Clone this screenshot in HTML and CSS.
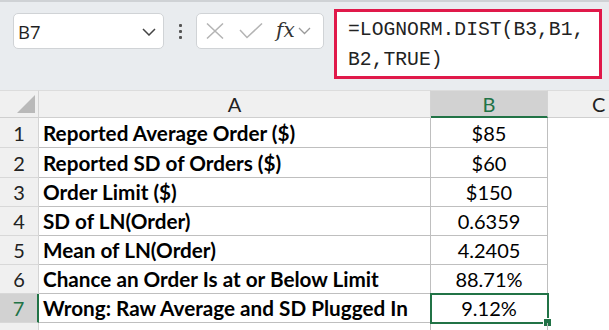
FILE: index.html
```html
<!DOCTYPE html>
<html>
<head>
<meta charset="utf-8">
<link rel="stylesheet" href="styles.css">
</head>
<body>
<div class="app">
  <div class="toolbar">
    <div class="namebox">
      <span class="name">B7</span>
      <svg class="chev" width="14" height="8" viewBox="0 0 14 8"><path d="M1 1 L7 7 L13 1" fill="none" stroke="#444" stroke-width="1.5"/></svg>
    </div>
    <div class="dots"><span></span><span></span><span></span></div>
    <div class="controls">
      <svg width="18" height="16" viewBox="0 0 18 16"><path d="M1 0.5 L17 15.5 M17 0.5 L1 15.5" stroke="#b4b4b4" stroke-width="1.5" fill="none"/></svg>
      <svg width="24" height="16" viewBox="0 0 24 16"><path d="M1 7 L8 14.5 L23 0.5" stroke="#b4b4b4" stroke-width="1.5" fill="none"/></svg>
      <span class="fx">fx</span>
      <svg width="13" height="8" viewBox="0 0 13 8"><path d="M1 1 L6.5 6.5 L12 1" fill="none" stroke="#9a9a9a" stroke-width="1.3"/></svg>
    </div>
    <div class="formula">=LOGNORM.DIST(B3,B1,<br>B2,TRUE)</div>
  </div>
  <div class="sheet">
    <div class="hd corner"><span class="tri"></span></div>
    <div class="hd col">A</div>
    <div class="hd col sel-col">B</div>
    <div class="hd col last">C</div>

    <div class="rh">1</div><div class="ca">Reported Average Order ($)</div><div class="cb">$85</div><div class="cc"></div>
    <div class="rh">2</div><div class="ca">Reported SD of Orders ($)</div><div class="cb">$60</div><div class="cc"></div>
    <div class="rh">3</div><div class="ca">Order Limit ($)</div><div class="cb">$150</div><div class="cc"></div>
    <div class="rh">4</div><div class="ca">SD of LN(Order)</div><div class="cb">0.6359</div><div class="cc"></div>
    <div class="rh">5</div><div class="ca">Mean of LN(Order)</div><div class="cb">4.2405</div><div class="cc"></div>
    <div class="rh">6</div><div class="ca">Chance an Order Is at or Below Limit</div><div class="cb">88.71%</div><div class="cc"></div>
    <div class="rh sel-row">7</div><div class="ca">Wrong: Raw Average and SD Plugged In</div><div class="cb active">9.12%<span class="handle"></span></div><div class="cc"></div>
    <div class="rh"></div><div class="ca blank"></div><div class="cb blank"></div><div class="cc"></div>
  </div>
</div>
</body>
</html>
```

FILE: styles.css
```css
html, body {
  margin: 0;
  padding: 0;
}
body {
  width: 609px;
  height: 330px;
  overflow: hidden;
  background: #ffffff;
}
.app {
  width: 609px;
  height: 330px;
  overflow: hidden;
}
.toolbar {
  height: 90px;
  box-sizing: border-box;
  background: #e9ecef;
  border-top: 2px solid #cfd2d5;
  display: flex;
  align-items: flex-start;
  padding-top: 7px;
  padding-left: 13px;
}
.namebox {
  margin-top: 4px;
  width: 151px;
  height: 36px;
  box-sizing: border-box;
  background: #fff;
  border: 1px solid #d0d3d6;
  border-radius: 5px;
  display: flex;
  align-items: center;
  justify-content: space-between;
  padding: 0 7px 0 4px;
}
.name {
  font-family: "Open Sans", "Noto Sans", sans-serif;
  font-size: 18.5px;
  color: #1f1f1f;
}
.chev {
  margin-top: 2px;
}
.dots {
  width: 32px;
  height: 36px;
  margin-top: 4px;
  display: flex;
  flex-direction: column;
  align-items: center;
  justify-content: center;
  gap: 3px;
}
.dots span {
  width: 3px;
  height: 3px;
  background: #555;
  border-radius: 1px;
}
.controls {
  margin-top: 4px;
  width: 128px;
  height: 36px;
  box-sizing: border-box;
  background: #fff;
  border: 1px solid #d0d3d6;
  border-radius: 5px;
  display: flex;
  align-items: center;
  padding: 0 4px 0 9px;
}
.controls svg:nth-child(1) { margin-right: 15px; }
.controls svg:nth-child(2) { margin-right: 13px; }
.fx {
  font-family: "DejaVu Serif", "Liberation Serif", serif;
  font-style: italic;
  font-size: 20px;
  color: #333;
  margin-right: 3px;
  margin-top: -3px;
}
.formula {
  margin-left: 10px;
  width: 268px;
  height: 70px;
  box-sizing: border-box;
  background: #fff;
  border: 3px solid #e0194a;
  font-family: "Liberation Mono", "DejaVu Sans Mono", monospace;
  font-size: 19.7px;
  line-height: 30px;
  color: #222;
  padding: 3px 0 0 11px;
}
.sheet {
  display: grid;
  grid-template-columns: 39px 392px 117px 61px;
  grid-template-rows: 28px 30px 30px 29px 29px 29px 29px 29px 20px;
  font-family: "Lato", "Liberation Sans", sans-serif;
  font-size: 20px;
  color: #000;
}
.sheet > div {
  box-sizing: border-box;
}
.hd {
  background: #f0f0f0;
  border-right: 1px solid #d4d4d4;
  border-bottom: 1px solid #cfcfcf;
  border-top: 1px solid #dcdcdc;
  display: flex;
  align-items: center;
  justify-content: center;
  color: #222;
}
.hd.last {
  border-right: none;
  justify-content: flex-start;
  padding-left: 44px;
}
.corner {
  position: relative;
}
.tri {
  position: absolute;
  left: 17px;
  top: 4px;
  width: 0;
  height: 0;
  border-left: 18px solid transparent;
  border-bottom: 18px solid #b9b9b9;
}
.sel-col {
  background: #d2d2d2;
  color: #217346;
  border-bottom: 2px solid #217346;
}
.rh {
  background: #f0f0f0;
  border-right: 1px solid #d4d4d4;
  border-bottom: 1px solid #d8d8d8;
  display: flex;
  align-items: center;
  justify-content: center;
  color: #222;
}
.sel-row {
  background: #d2d2d2;
  color: #217346;
  border-right: 2px solid #217346;
}
.ca {
  border-right: 1px solid #bfbfbf;
  border-bottom: 1px solid #bfbfbf;
  font-weight: bold;
  font-size: 20.7px;
  padding-left: 4px;
  display: flex;
  align-items: center;
  white-space: nowrap;
}
.cb {
  border-right: 1px solid #bfbfbf;
  border-bottom: 1px solid #bfbfbf;
  display: flex;
  align-items: center;
  justify-content: center;
  position: relative;
}
.blank {
  border-bottom: none;
}
.cc {
  background: #fff;
}
.active {
  outline: 2px solid #217346;
  outline-offset: -1px;
}
.handle {
  position: absolute;
  right: -5px;
  bottom: -5px;
  width: 7px;
  height: 7px;
  background: #217346;
  border: 1px solid #fff;
}
```
